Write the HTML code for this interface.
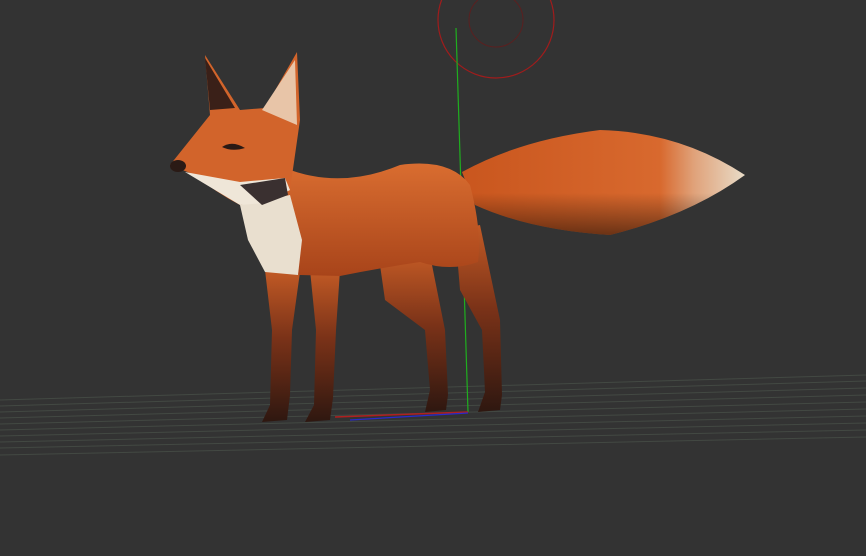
<!DOCTYPE html>
<html><head><meta charset="utf-8"><style>
html,body{margin:0;padding:0;background:#333333;width:866px;height:556px;overflow:hidden}
</style></head><body>
<svg width="866" height="556" viewBox="0 0 866 556" xmlns="http://www.w3.org/2000/svg">
<defs>
<linearGradient id="leg" x1="0" y1="0" x2="0" y2="1"><stop offset="0" stop-color="#c25a25"/><stop offset="0.45" stop-color="#7a3218"/><stop offset="1" stop-color="#2e1710"/></linearGradient>
<linearGradient id="tail" x1="0" y1="0" x2="1" y2="0"><stop offset="0" stop-color="#c9561e"/><stop offset="0.7" stop-color="#d8692e"/><stop offset="0.82" stop-color="#e0a27a"/><stop offset="1" stop-color="#e8dcc8"/></linearGradient>
<linearGradient id="tailv" x1="0" y1="0" x2="0" y2="1"><stop offset="0" stop-color="#000" stop-opacity="0"/><stop offset="0.6" stop-color="#000" stop-opacity="0"/><stop offset="1" stop-color="#000" stop-opacity="0.5"/></linearGradient>
<linearGradient id="body" x1="0" y1="0" x2="0" y2="1"><stop offset="0" stop-color="#d96d30"/><stop offset="1" stop-color="#a8441a"/></linearGradient>
</defs>
<rect width="866" height="556" fill="#333333"/>
<g stroke="#434943" stroke-width="1">
<line x1="0" y1="400" x2="866" y2="375"/><line x1="0" y1="406" x2="866" y2="381"/><line x1="0" y1="412" x2="866" y2="388"/><line x1="0" y1="418" x2="866" y2="395"/><line x1="0" y1="424" x2="866" y2="402"/><line x1="0" y1="430" x2="866" y2="409"/><line x1="0" y1="436" x2="866" y2="416"/><line x1="0" y1="442" x2="866" y2="423"/><line x1="0" y1="448" x2="866" y2="430"/><line x1="0" y1="455" x2="866" y2="437"/>
</g>
<circle cx="496" cy="20" r="58" fill="none" stroke="#a01c1c" stroke-width="1.2"/>
<circle cx="496" cy="20" r="27" fill="none" stroke="#5a2020" stroke-width="1"/>
<line x1="456" y1="28" x2="468" y2="412" stroke="#1fae1f" stroke-width="1.2"/>
<!-- tail -->
<path d="M462,172 Q520,140 600,130 Q680,132 745,175 Q690,215 610,235 Q530,230 475,205 Z" fill="url(#tail)"/>
<path d="M462,172 Q520,140 600,130 Q680,132 745,175 Q690,215 610,235 Q530,230 475,205 Z" fill="url(#tailv)"/>
<!-- rear legs -->
<path d="M380,265 L430,255 L445,330 L448,395 L446,410 L425,412 L430,390 L425,330 L385,300 Z" fill="url(#leg)"/>
<path d="M455,230 L480,225 L500,320 L502,395 L500,410 L478,412 L485,392 L482,330 L460,290 Z" fill="url(#leg)"/>
<!-- front legs -->
<path d="M265,270 L300,272 L292,330 L290,395 L287,420 L262,422 L270,405 L272,330 Z" fill="url(#leg)"/>
<path d="M310,270 L340,270 L336,330 L333,398 L330,420 L305,422 L314,405 L316,330 Z" fill="url(#leg)"/>
<!-- body -->
<path d="M285,168 Q340,190 400,165 Q450,158 470,185 Q482,230 478,262 Q450,272 420,262 Q380,268 340,276 L300,275 L270,260 L260,220 Z" fill="url(#body)"/>
<!-- chest -->
<path d="M240,205 L290,195 L302,240 L298,275 L265,272 L248,240 Z" fill="#e9dfcf"/>
<!-- head -->
<path d="M170,165 Q190,140 210,115 L205,55 L240,110 L265,108 L297,52 L300,120 L290,190 L265,200 L240,205 Q215,192 195,175 Z" fill="#d2642b"/>
<path d="M210,110 L205,58 L235,108 Z" fill="#3a2018"/>
<path d="M262,110 L295,60 L297,125 Z" fill="#e8c5a8"/>
<path d="M185,172 L240,182 L285,178 L290,190 L265,203 L240,205 Z" fill="#efe6d8"/>
<path d="M240,185 L285,178 L288,195 L262,205 Z" fill="#3a3030"/>
<ellipse cx="178" cy="166" rx="8" ry="6" fill="#2a1a15"/>
<path d="M222,147 Q232,140 245,148 Q232,152 222,147 Z" fill="#2a1a15"/>
<line x1="335" y1="417" x2="468" y2="412" stroke="#b02020" stroke-width="1.5"/>
<line x1="350" y1="420" x2="468" y2="413" stroke="#2a2acc" stroke-width="1.2"/>
</svg>
</body></html>
